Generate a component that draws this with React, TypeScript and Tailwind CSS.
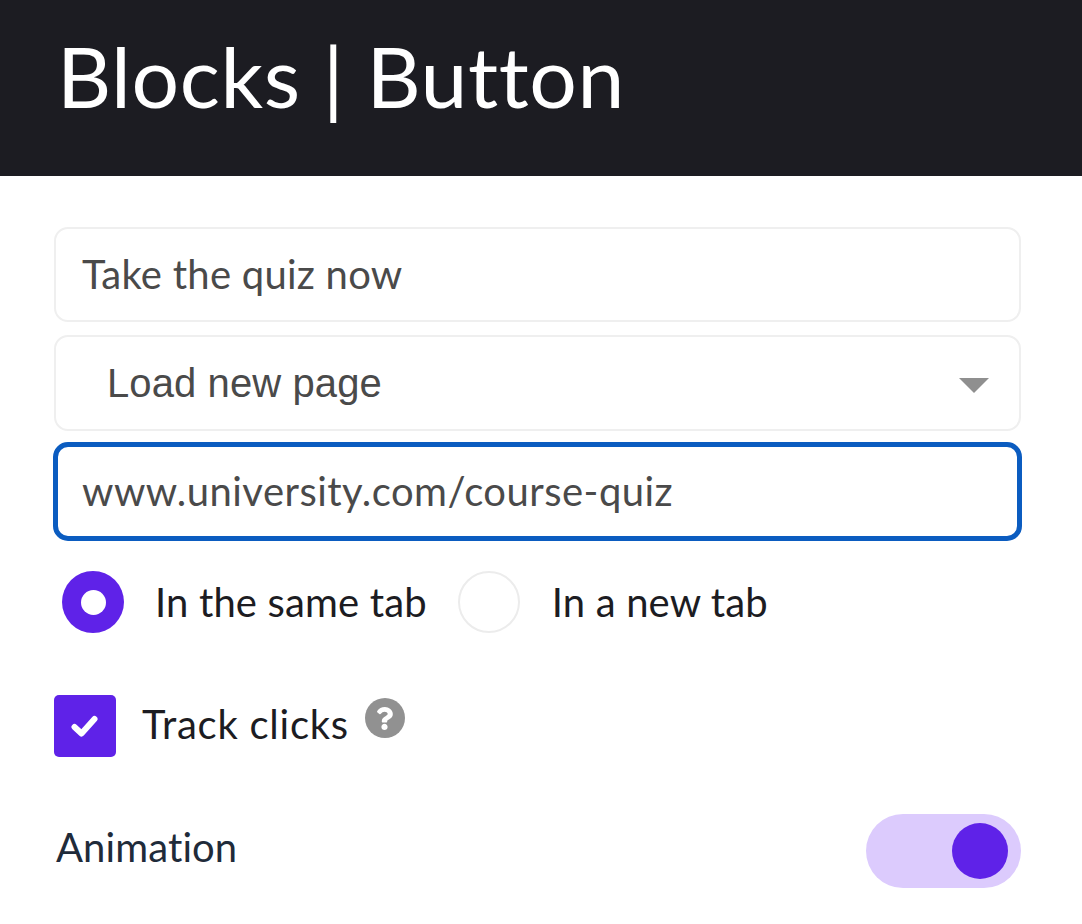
import { FaQuestion } from 'react-icons/fa';

const labelFont = "[font-family:Lato,'Liberation_Sans',sans-serif]";

export default function App() {
  return (
    <div className={`w-[1082px] h-[924px] overflow-hidden bg-white ${labelFont}`}>
      <header className="h-[176px] bg-[#1c1c22] pl-[57px] pt-[26px]">
        <h1 className="text-[84px] leading-[100px] font-normal tracking-[0.6px] text-white">Blocks | Button</h1>
      </header>

      <main className="pl-[54px] pr-[61px] pt-[51px]">
        <div className="h-[95px] rounded-[14px] border-2 border-[#efefef] pl-[26px] pb-[2px] flex items-center text-[40px] tracking-[0.25px] text-[#4a4a4a]">
          Take the quiz now
        </div>

        <div className="mt-[13px] h-[96px] rounded-[14px] border-2 border-[#efefef] pl-[51px] pr-[30px] flex items-center justify-between text-[#4a4a4a]">
          <span className="text-[40px] tracking-[0.1px] [font-family:'Liberation_Sans',Arial,sans-serif]">Load new page</span>
          <svg width="32" height="17" viewBox="0 0 32 17" className="mt-[5px] -mr-[1px]">
            <path d="M1 1h30L16 16z" fill="#8f8f8f" />
          </svg>
        </div>

        <div className="mt-[11px] -ml-[1px] -mr-[1px] h-[99px] rounded-[15px] border-[5px] border-[#0b5cc0] pl-[24px] pb-[2px] flex items-center text-[40px] tracking-[0.47px] text-[#4a4a4a]">
          www.university.com/course-quiz
        </div>

        <div className="mt-[30px] flex items-center pl-[8px] text-[40px] tracking-[0.15px] text-[#1c1c22]">
          <span className="size-[62px] rounded-full bg-[#5f22e8] flex items-center justify-center">
            <span className="size-[25px] rounded-full bg-white" />
          </span>
          <span className="ml-[31px]">In the same tab</span>
          <span className="ml-[31px] size-[62px] rounded-full border-2 border-[#ececec]" />
          <span className="ml-[32px]">In a new tab</span>
        </div>

        <div className="mt-[61px] flex items-center text-[40px] text-[#1c1c22]">
          <span className="size-[62px] rounded-[5px] bg-[#5f22e8] flex items-center justify-center">
            <svg width="28" height="24" viewBox="0 0 28 24" fill="none">
              <path d="M3.5 13l7 6.5L23.5 5" stroke="white" strokeWidth="6" strokeLinecap="round" strokeLinejoin="round" />
            </svg>
          </span>
          <span className="ml-[26px] pb-[4px] tracking-[0.75px]">Track clicks</span>
          <span className="ml-[16px] mb-[16px] size-[40px] rounded-full bg-[#919191] flex items-center justify-center">
            <FaQuestion className="size-[23px] text-white" />
          </span>
        </div>

        <div className="mt-[56px] flex items-center justify-between">
          <span className="ml-[2px] pb-[8px] text-[40px] tracking-[0.1px] text-[#1f2b3a]">Animation</span>
          <span className="w-[155px] h-[74px] rounded-full bg-[#dccbfd] flex items-center justify-end pr-[13px]">
            <span className="size-[56px] rounded-full bg-[#5f22e8]" />
          </span>
        </div>
      </main>
    </div>
  );
}
